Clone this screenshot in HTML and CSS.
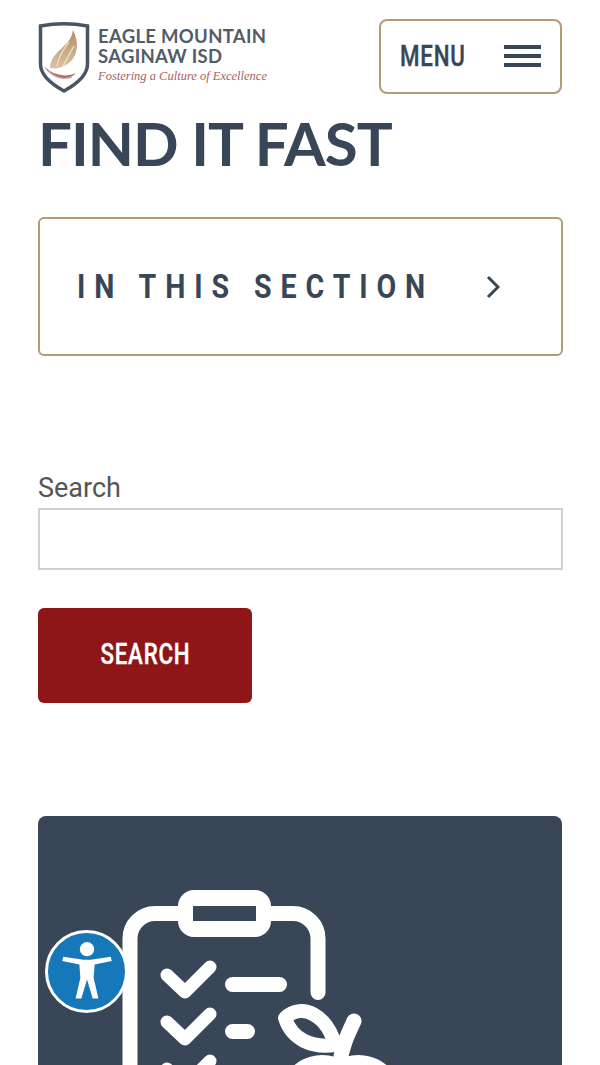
FILE: index.html
```html
<!DOCTYPE html>
<html lang="en">
<head>
<meta charset="utf-8">
<title>Find It Fast</title>
<link rel="stylesheet" href="styles.css">
</head>
<body>
<div class="page">
  <header class="header">
    <a class="logo" href="#">
      <svg class="shield" viewBox="0 0 52 72" width="52" height="72">
        <defs>
          <linearGradient id="feather" x1="0" y1="0" x2="0" y2="1">
            <stop offset="0" stop-color="#b08d62"/>
            <stop offset="1" stop-color="#d9c3a6"/>
          </linearGradient>
        </defs>
        <path d="M2.5 4 Q26 -0.5 49.5 4 V42 C49.5 54 37 63 26 69 C15 63 2.5 54 2.5 42 Z" fill="#fff" stroke="#4a5563" stroke-width="3.5"/>
        <path d="M35 8 C41 20 40 32 33 39 C27 45 20 47 12 46 C12 36 20 30 26 24 C31 19 34 15 35 8 Z" fill="url(#feather)"/>
        <path d="M31 20 C25 28 21 34 19 44 M36 24 C31 32 29 38 25 44" stroke="#efe4d4" stroke-width="1.2" fill="none"/>
        <path d="M6 44 C14 53 28 56 38 51 C30 60 14 58 6 44 Z" fill="#a86a68"/>
        <path d="M10 49 C18 56 26 58 34 55" stroke="#d2a9a7" stroke-width="1.4" fill="none"/>
      </svg>
      <span class="logo-text">
        <span class="logo-name">EAGLE MOUNTAIN</span>
        <span class="logo-name">SAGINAW ISD</span>
        <span class="logo-tag">Fostering a Culture of Excellence</span>
      </span>
    </a>
    <button class="menu-btn" type="button">
      <span class="menu-label">MENU</span>
      <span class="burger"><i></i><i></i><i></i></span>
    </button>
  </header>

  <h1 class="title">FIND IT FAST</h1>

  <button class="section-btn" type="button">
    <span class="section-label">IN THIS SECTION</span>
    <svg class="chev" viewBox="0 0 14 24" width="14" height="24"><path d="M2 2 L12 12 L2 22" fill="none" stroke="#394657" stroke-width="3"/></svg>
  </button>

  <form class="search">
    <label class="search-label" for="q">Search</label>
    <input class="search-input" id="q" type="text">
    <button class="search-btn" type="button"><span class="search-btn-label">SEARCH</span></button>
  </form>

  <section class="card">
    <svg class="card-icon" viewBox="0 0 300 175" width="300" height="175">
      <path fill="#fff" fill-rule="evenodd" d="M72 0 H133 A16 16 0 0 1 149 16 V31 A16 16 0 0 1 133 47 H72 A16 16 0 0 1 56 31 V16 A16 16 0 0 1 72 0 Z M71 16 V31 H134 V16 Z"/>
      <g fill="none" stroke="#fff" stroke-width="15" stroke-linecap="round" stroke-linejoin="round">
        <path d="M8 200 V48.5 A25 25 0 0 1 33 23.5 H56"/>
        <path d="M149 23.5 H171 A25 25 0 0 1 196 48.5 V102.5"/>
        <path d="M110.5 94.5 H157.5"/>
        <path d="M110.5 141.5 H125.5"/>
        <path d="M163 128 C180 112 205 125 213 155 C190 158 170 150 163 128 Z" stroke-width="14"/>
        <path d="M232 131 C226 144 220 156 218 172"/>
        <path d="M165 200 C175 170 205 168 218 178 C232 168 262 170 272 200"/>
      </g>
      <g fill="none" stroke="#fff" stroke-width="13" stroke-linecap="round" stroke-linejoin="round">
        <path d="M45 85 L63 102 L88 77"/>
        <path d="M45 132 L63 149 L88 124"/>
        <path d="M45 179 L63 196 L88 171"/>
      </g>
    </svg>
  </section>
</div>

<button class="a11y" type="button" aria-label="Accessibility">
  <svg viewBox="0 0 80 80" width="76" height="76">
    <circle cx="40" cy="16" r="7.5" fill="#fff"/>
    <path d="M15 24 L36 27 H44 L65 24 L66 28.5 L48 32 L47 46 L52 68 H46 L40 48 L34 68 H28 L33 46 L32 32 L14 28.5 Z" fill="#fff"/>
  </svg>
</button>
</body>
</html>
```
FILE: styles.css
```css
* { box-sizing: border-box; }
html, body { margin: 0; padding: 0; height: 1065px; overflow: hidden; background: #fff; }
body { font-family: Roboto, sans-serif; color: #394657; position: relative; }
.page { padding: 19px 38px 0; }

.header { display: flex; justify-content: space-between; align-items: flex-start; height: 75px; }
.logo { display: flex; gap: 8px; align-items: flex-start; margin-top: 3px; text-decoration: none; }
.shield { flex: none; }
.logo-text { display: flex; flex-direction: column; padding-top: 4px; width: 172px; }
.logo-name { font: 700 18.5px/20px "Lato", sans-serif; letter-spacing: .3px; color: #525c69; white-space: nowrap; }
.logo-tag { font: italic 400 12.5px/14px "Liberation Serif", serif; color: #a8605e; white-space: nowrap; margin-top: 3px; }

.menu-btn { width: 183px; height: 75px; background: #fff; border: 2px solid #b39b78; border-radius: 8px; display: flex; align-items: center; justify-content: space-between; padding: 0 19px 0 19px; cursor: pointer; }
.menu-label { display: inline-block; font: 500 29px/1 "Roboto", sans-serif; letter-spacing: 1px; color: #394657; transform: scaleX(.77); transform-origin: left center; width: 70px; text-align: left; -webkit-text-stroke: .4px #394657; }
.burger { display: flex; flex-direction: column; gap: 5px; width: 37px; margin-top: -2px; }
.burger i { display: block; height: 4px; background: #394657; }

.title { font: 700 60px/70px "Lato", sans-serif; color: #394657; margin: 14px 0 0; letter-spacing: -1px; }

.section-btn { width: 525px; height: 139px; margin-top: 39px; background: #fff; border: 2px solid #b39b78; border-radius: 6px; display: flex; align-items: center; padding: 0 0 0 37px; cursor: pointer; }
.section-label { display: inline-block; font: 700 34px/1 "Roboto", sans-serif; letter-spacing: 10.6px; color: #394657; white-space: nowrap; width: 409px; text-align: left; transform: scaleX(.84); transform-origin: left center; margin-bottom: 2px; }
.chev { flex: none; }

.search { display: flex; flex-direction: column; align-items: flex-start; margin-top: 115px; }
.search-label { font: 400 27px/34px "Roboto", sans-serif; color: #555; }
.search-input { width: 525px; height: 62px; margin-top: 3px; border: 2px solid #d0d0d0; background: #fff; }
.search-btn { width: 214px; height: 95px; margin-top: 38px; background: #8e1518; color: #fff; border: 0; border-radius: 6px; cursor: pointer; }
.search-btn-label { display: inline-block; font: 500 29px/1 "Roboto", sans-serif; letter-spacing: 1px; transform: scaleX(.77); margin-top: -2px; -webkit-text-stroke: .4px #fff; }

.card { margin-top: 113px; height: 249px; background: #394657; border-radius: 8px 8px 0 0; padding: 74px 0 0 84px; }
.card-icon { display: block; overflow: hidden; }

.a11y { position: absolute; left: 45px; top: 930px; width: 83px; height: 83px; padding: 0; border: 3px solid #fff; border-radius: 50%; background: #1678b8; display: flex; align-items: center; justify-content: center; }
```
